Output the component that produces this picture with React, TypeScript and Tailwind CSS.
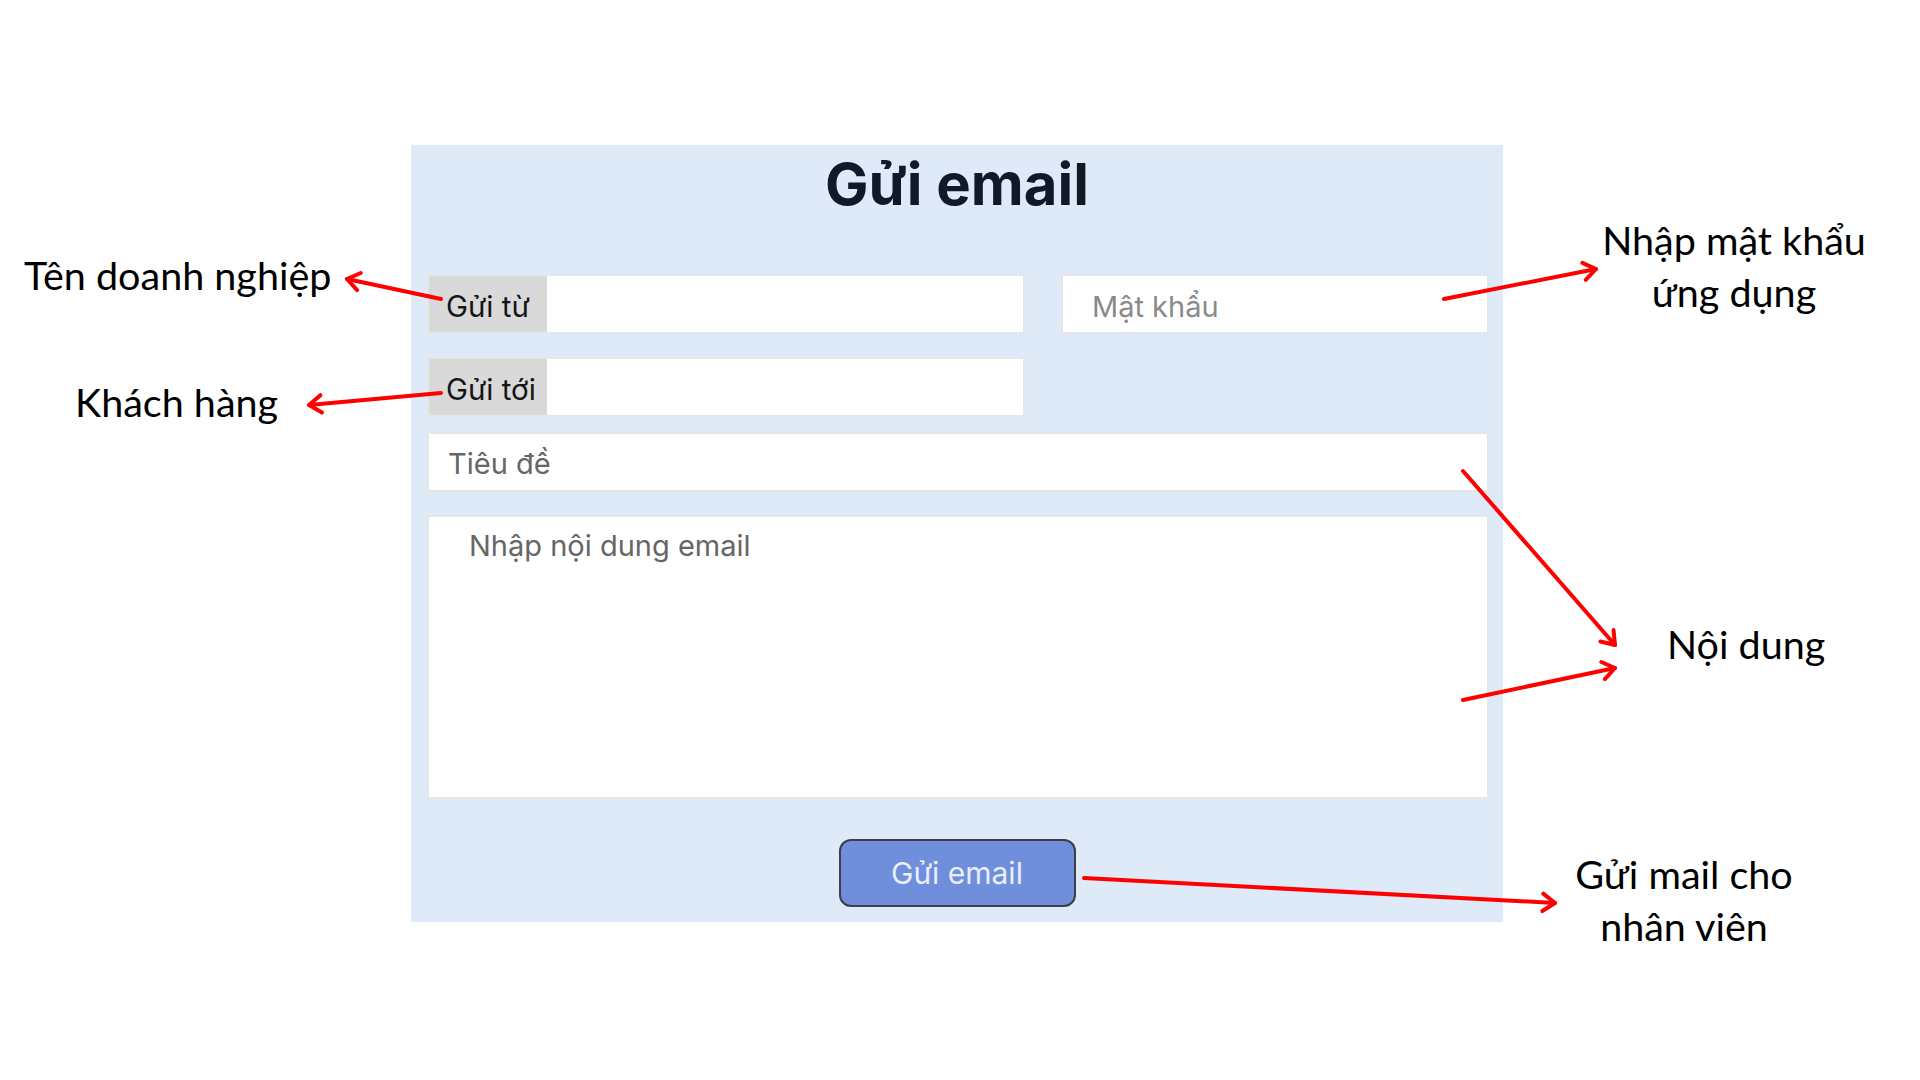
import React from 'react';

type Arrow = { x1: number; y1: number; x2: number; y2: number };

// chú thích: các mũi tên đỏ trỏ từ form ra nhãn
const ARROWS: Arrow[] = [
    { x1: 441, y1: 299, x2: 347, y2: 279 },
    { x1: 441, y1: 393, x2: 309, y2: 405 },
    { x1: 1444, y1: 299, x2: 1596, y2: 269 },
    { x1: 1463, y1: 471, x2: 1615, y2: 645 },
    { x1: 1463, y1: 700, x2: 1615, y2: 668 },
    { x1: 1084, y1: 878, x2: 1555, y2: 903 },
];

function arrowHead({ x1, y1, x2, y2 }: Arrow) {
    const ang = Math.atan2(y2 - y1, x2 - x1);
    const len = 15;
    const spread = 0.62;
    const a = [x2 - len * Math.cos(ang - spread), y2 - len * Math.sin(ang - spread)];
    const b = [x2 - len * Math.cos(ang + spread), y2 - len * Math.sin(ang + spread)];
    return `M${a[0]},${a[1]} L${x2},${y2} L${b[0]},${b[1]}`;
}

function Annotations() {
    return (
        <>
            <svg className="absolute inset-0 pointer-events-none" width={1920} height={1080}>
                {ARROWS.map((a, i) => (
                    <g key={i} stroke="#ff0000" strokeWidth={4} strokeLinecap="round" strokeLinejoin="round" fill="none">
                        <line x1={a.x1} y1={a.y1} x2={a.x2} y2={a.y2} />
                        <path d={arrowHead(a)} />
                    </g>
                ))}
            </svg>

            <div className="absolute left-[24px] top-[250px] text-[39.5px] leading-[50px] text-black whitespace-nowrap" style={{ fontFamily: 'Lato, "Noto Sans", sans-serif' }}>
                Tên doanh nghiệp
            </div>
            <div className="absolute left-[75px] top-[377px] text-[39.5px] leading-[50px] text-black whitespace-nowrap" style={{ fontFamily: 'Lato, "Noto Sans", sans-serif' }}>
                Khách hàng
            </div>
            <div className="absolute left-[1584px] top-[214px] w-[300px] text-center text-[39.5px] leading-[52px] text-black" style={{ fontFamily: 'Lato, "Noto Sans", sans-serif' }}>
                Nhập mật khẩu<br />ứng dụng
            </div>
            <div className="absolute left-[1667px] top-[619px] text-[39.5px] leading-[50px] text-black whitespace-nowrap" style={{ fontFamily: 'Lato, "Noto Sans", sans-serif' }}>
                Nội dung
            </div>
            <div className="absolute left-[1534px] top-[848px] w-[300px] text-center text-[39.5px] leading-[52px] text-black" style={{ fontFamily: 'Lato, "Noto Sans", sans-serif' }}>
                Gửi mail cho<br />nhân viên
            </div>
        </>
    );
}

function LabeledInput({ label }: { label: string }) {
    return (
        <div className="flex w-[598px] h-[60px] border-2 border-[#e4e6e8] bg-white">
            <div className="w-[118px] shrink-0 bg-[#d9d9d9] flex items-center pl-[17px] pt-[5px] text-[29.5px] text-[#151515]">
                {label}
            </div>
            <input type="text" className="flex-1 min-w-0 bg-white outline-none px-4 text-[29px]" />
        </div>
    );
}

export default function App() {
    return (
        <div
            className="relative w-[1920px] h-[1080px] bg-white overflow-hidden pt-[145px] pl-[411px]"
            style={{ fontFamily: 'Inter, "Noto Sans", sans-serif' }}
        >
            {/* ===== FORM ===== */}
            <div className="w-[1092px] h-[777px] bg-[#deeaf8] px-4 pt-[9px] flex flex-col">
                <h1 className="text-center text-[58px] leading-[60px] font-bold text-[#111827]">Gửi email</h1>

                <div className="mt-[60px] flex gap-[36px]">
                    <LabeledInput label="Gửi từ" />
                    <input
                        type="password"
                        placeholder="Mật khẩu"
                        className="w-[428px] h-[60px] border-2 border-[#e4e6e8] bg-white outline-none pl-[29px] pt-[4px] text-[29px] placeholder:text-[#8a8a8a]"
                    />
                </div>

                <div className="mt-[23px] flex">
                    <LabeledInput label="Gửi tới" />
                </div>

                <input
                    type="text"
                    placeholder="Tiêu đề"
                    className="mt-[15px] w-[1062px] h-[60px] border-2 border-[#e4e6e8] bg-white outline-none pl-[19px] pt-[3px] text-[29px] placeholder:text-[#666666]"
                />

                <textarea
                    placeholder="Nhập nội dung email"
                    className="mt-[23px] w-[1062px] h-[284px] border-2 border-[#e4e6e8] bg-white outline-none resize-none pl-[40px] pt-[11px] text-[29px] leading-[36px] placeholder:text-[#666666]"
                />

                <div className="mt-[40px] flex justify-center">
                    <button className="w-[237px] h-[68px] rounded-[12px] border-2 border-[#3c3f45] bg-[#6f8fdc] text-[30px] text-[#e9eef9]">
                        Gửi email
                    </button>
                </div>
            </div>

            <Annotations />
        </div>
    );
}
